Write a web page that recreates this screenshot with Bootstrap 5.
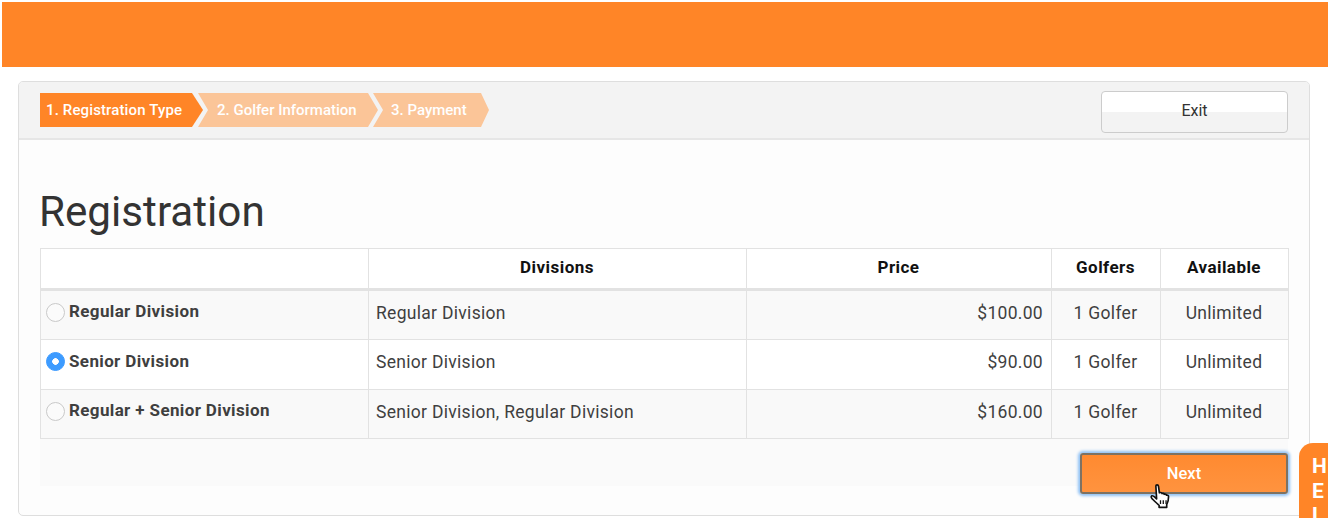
<!DOCTYPE html>
<html lang="en">
<head>
<meta charset="utf-8">
<title>Registration</title>
<link rel="stylesheet" href="https://cdn.jsdelivr.net/npm/bootstrap@5.3.0/dist/css/bootstrap.min.css">
<style>
html,body{height:518px;overflow:hidden}
body{background:#fff;font-family:Roboto,"Liberation Sans",sans-serif;color:#3a3a3a;position:relative}
.topband{height:65px;margin:2px 6px 0 2px;background:#ff8527}
.panel{margin:14px 24px 0 18px;height:435px;border:1px solid #dedede;border-radius:5px;background:#fdfdfd;overflow:hidden}
.panel-head{height:58px;background:#f3f3f3;border-bottom:2px solid #e6e6e6;padding:11px 21px 0 21px}
.step{height:34px;line-height:35px;font-size:15px;font-weight:500;color:#fff;padding-left:6px;background:#ff8527;width:163px;clip-path:polygon(0 0,152px 0,100% 50%,152px 100%,0 100%)}
.step-first{letter-spacing:.13px}
.step-b{width:180px;margin-left:-5px;padding-left:19px;background:#fbc598;clip-path:polygon(0 0,170px 0,100% 50%,170px 100%,0 100%,10px 50%)}
.step-c{width:116px;padding-left:18px;clip-path:polygon(0 0,108px 0,100% 50%,108px 100%,0 100%,10px 50%)}
.exit-btn{width:187px;height:42px;margin-top:-2px;padding:0 0 3px;font-size:16px;color:#333;border:1px solid #ccc;border-radius:4px;background:linear-gradient(#fff 0,#fff 50%,#f3f3f3 50%,#f3f3f3 100%)}
.panel-body{padding:44px 21px 0 21px}
.page-title{font-size:42.2px;font-weight:400;line-height:56px;margin:0 0 8px -1px;color:#333}
.reg-table{width:1248px;table-layout:fixed;margin:0;border-color:#e2e2e2;font-size:17.500px;letter-spacing:.3px;color:#3f3f3f;--bs-table-striped-bg:#f9f9f9;--bs-table-bg:#fff;--bs-table-color:#3f3f3f;--bs-table-striped-color:#3f3f3f}
.reg-table th,.reg-table td{padding:0 8px 4px 7px;vertical-align:middle;border-color:#e2e2e2}
.reg-table thead tr{height:41px}
.reg-table thead th{font-size:17px;letter-spacing:.45px;font-weight:700;color:#111;text-align:center;border-bottom:3px solid #e2e2e2;padding-bottom:2px}
.reg-table tbody tr{height:50px}
.reg-table tbody tr:last-child{height:49px}
.option-cell{font-weight:700;font-size:17px;letter-spacing:.37px;padding-left:5px!important}
.option-line{display:flex;align-items:center;gap:4px;margin-top:-2px}
.radio-dot{width:19px;height:19px;margin:0;flex:none;border:1px solid #c9c9c9;background-color:#fbfbfb}
.radio-dot:checked{background-color:#3d9bff;border-color:#3d9bff;background-image:radial-gradient(circle,#fff 0,#fff 3px,transparent 3.6px)}
.panel-foot{height:47px;background:#fafafa;display:flex;justify-content:flex-end;align-items:flex-start}
.next-btn{width:208px;height:41px;margin-top:14px;padding:2px 0 0;font-size:16.500px;font-weight:500;color:#fff;background:linear-gradient(#ff8a30,#ff933f);border:2px solid #7d7263;border-radius:3px;box-shadow:0 0 3px 2px #8fc1f5}
.next-btn:hover,.next-btn:active,.next-btn:focus{color:#fff;background:linear-gradient(#ff8a30,#ff933f)}
.help-tab{position:absolute;left:1299px;top:443px;width:29px;height:75px;background:#ff8527;border-radius:14px 0 0 0;color:#fff;font-weight:700;font-size:21px;line-height:24.600px;padding:11px 0 0 13px;overflow:hidden}
.pointer{position:absolute;left:1149px;top:484px;width:23px;height:25px}
</style>
</head>
<body>
<div class="topband"></div>
<main class="panel">
  <div class="panel-head d-flex justify-content-between">
    <div class="d-flex">
      <div class="step step-first">1. Registration Type</div>
      <div class="step step-b">2. Golfer Information</div>
      <div class="step step-b step-c">3. Payment</div>
    </div>
    <button type="button" class="btn exit-btn">Exit</button>
  </div>
  <div class="panel-body">
    <h1 class="page-title">Registration</h1>
    <table class="table table-bordered table-striped reg-table">
      <colgroup><col style="width:328px"><col style="width:378px"><col style="width:305px"><col style="width:109px"><col style="width:128px"></colgroup>
      <thead><tr><th></th><th>Divisions</th><th>Price</th><th>Golfers</th><th>Available</th></tr></thead>
      <tbody>
        <tr><td class="option-cell"><label class="option-line"><input class="form-check-input radio-dot" type="radio" name="div">Regular Division</label></td><td>Regular Division</td><td class="text-end">$100.00</td><td class="text-center">1 Golfer</td><td class="text-center">Unlimited</td></tr>
        <tr><td class="option-cell"><label class="option-line"><input class="form-check-input radio-dot" type="radio" name="div" checked>Senior Division</label></td><td>Senior Division</td><td class="text-end">$90.00</td><td class="text-center">1 Golfer</td><td class="text-center">Unlimited</td></tr>
        <tr><td class="option-cell"><label class="option-line"><input class="form-check-input radio-dot" type="radio" name="div">Regular + Senior Division</label></td><td>Senior Division, Regular Division</td><td class="text-end">$160.00</td><td class="text-center">1 Golfer</td><td class="text-center">Unlimited</td></tr>
      </tbody>
    </table>
    <div class="panel-foot"><button type="button" class="btn next-btn">Next</button></div>
  </div>
</main>
<aside class="help-tab">H<br>E<br>L</aside>
<svg class="pointer" viewBox="0 0 24 27" aria-hidden="true"><path d="M7 2.200c0-1.600 2.600-1.600 2.800 0l1 7.300 1-.3c1.200-.2 1.700.3 1.900 1.100.9-.5 2-.2 2.300.8 1-.5 2.200-.1 2.500 1 1.300-.3 2.200.5 2.200 1.800 0 3-.6 6-2 8.400v3H10.500v-2.300C8.500 21.500 6 19 3.500 16.500 1.700 14.800 1.500 13.400 2.500 12.800c1-.5 2.500.3 5.300 3.200z" fill="#fff" stroke="#111" stroke-width="1.800" stroke-linejoin="round"/><path d="M12 17.500v4M15 17.500v4M18 17.500v4" stroke="#111" stroke-width="1.400" fill="none"/></svg>
</body>
</html>
